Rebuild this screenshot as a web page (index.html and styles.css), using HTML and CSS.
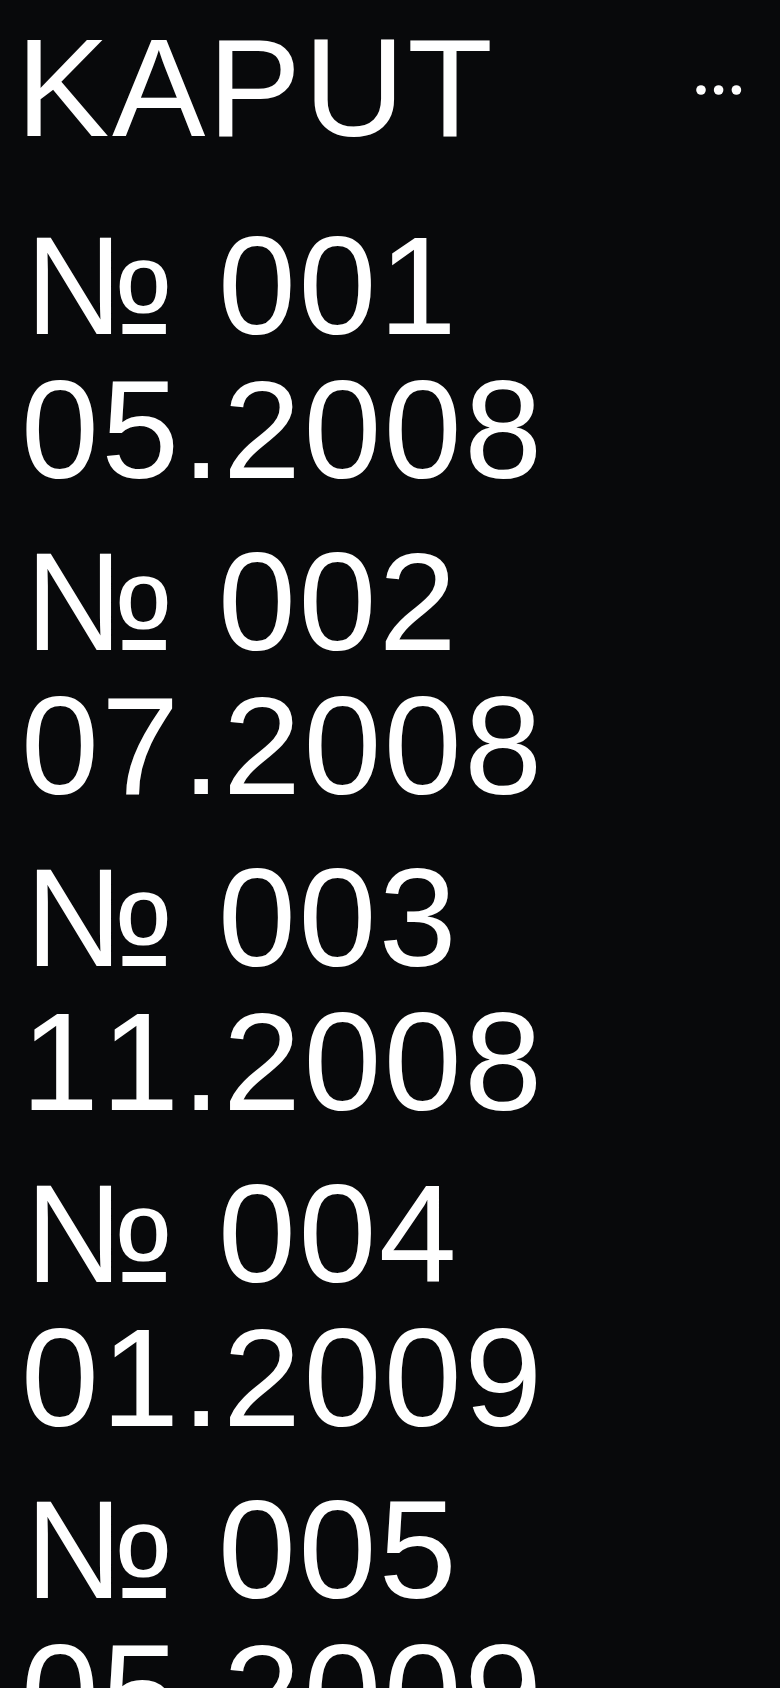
FILE: index.html
```html
<!DOCTYPE html>
<html lang="ru">
<head>
<meta charset="utf-8">
<title>KAPUT</title>
<link rel="stylesheet" href="styles.css">
</head>
<body>
<header class="top">
  <div class="logo">KAPUT</div>
  <button class="more" aria-label="Меню">
    <svg width="46" height="10" viewBox="0 0 46 10"><circle cx="5" cy="5" r="4.8" fill="#fff"/><circle cx="22.6" cy="5" r="4.8" fill="#fff"/><circle cx="40.4" cy="5" r="4.8" fill="#fff"/></svg>
  </button>
</header>
<main class="issues">
  <a class="issue" href="#"><span class="num">№ 001</span><span class="date">05.2008</span></a>
  <a class="issue" href="#"><span class="num">№ 002</span><span class="date">07.2008</span></a>
  <a class="issue" href="#"><span class="num">№ 003</span><span class="date">11.2008</span></a>
  <a class="issue" href="#"><span class="num">№ 004</span><span class="date">01.2009</span></a>
  <a class="issue" href="#"><span class="num">№ 005</span><span class="date">05.2009</span></a>
</main>
</body>
</html>
```
FILE: styles.css
```css
html, body {
  margin: 0;
  padding: 0;
  background: #08090b;
}
body {
  color: #fff;
  font-family: "Liberation Sans", Arial, sans-serif;
  font-size: 140px;
  line-height: 144px;
  letter-spacing: 2.5px;
  font-kerning: none;
  font-feature-settings: "kern" 0;
}
.top {
  display: flex;
  justify-content: space-between;
  align-items: center;
  padding: 16px 38px 0 16px;
}
.logo {
  font-size: 140px;
  line-height: 144px;
}
.more {
  background: none;
  border: 0;
  padding: 0;
  margin-top: 3px;
  display: flex;
  line-height: 0;
  cursor: pointer;
}
.issues {
  display: flex;
  flex-direction: column;
  gap: 28px;
  padding: 54px 0 0 21px;
}
.issue {
  display: flex;
  flex-direction: column;
  color: #fff;
  text-decoration: none;
}
.num, .date {
  display: block;
  white-space: nowrap;
}
.num {
  padding-left: 3px;
}
```
